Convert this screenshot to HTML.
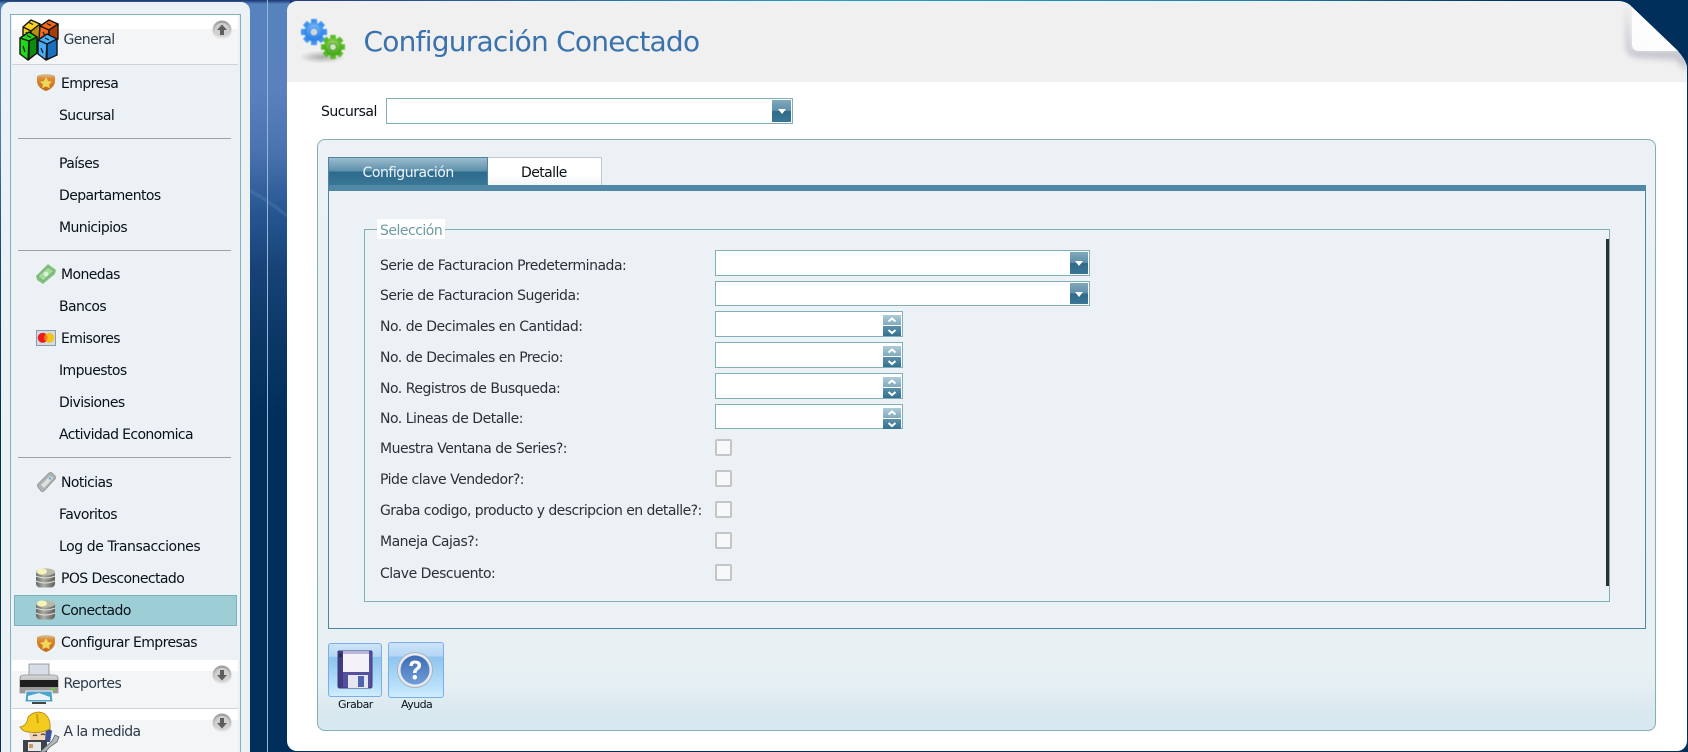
<!DOCTYPE html>
<html lang="es"><head><meta charset="utf-8"><title>Configuración Conectado</title>
<style>
html,body{margin:0;padding:0;width:1688px;height:752px;overflow:hidden}
body{position:relative;background:#002f5c;font-family:"DejaVu Sans","Liberation Sans",sans-serif;font-size:14px;color:#111}
.a{position:absolute;box-sizing:border-box}
.t{position:absolute;white-space:nowrap;line-height:20px;letter-spacing:-.58px;color:#0a1018;margin-top:1px}
.hr{position:absolute;left:18px;width:213px;height:1px;background:#a0a0a0}
.f{position:absolute;left:380px;white-space:nowrap;line-height:20px;letter-spacing:-.49px;color:#2b3036;margin-top:1px}
.i{position:absolute;box-sizing:border-box;background:#fff;border:1px solid #7fb0b6}
.b{position:absolute;box-sizing:border-box;background:linear-gradient(#7fa8bc,#5f90a9 48%,#2f6a8a 52%,#3b7696)}
.b:after{content:"";position:absolute;left:50%;top:50%;margin:-2px 0 0 -4px;border:4px solid transparent;border-top:5px solid #fff;border-bottom:0}
.u,.d{position:absolute;left:883px;width:18px;height:10px}
.u{background:linear-gradient(#aecbd8,#80aabd)}
.d{background:linear-gradient(#5b90aa,#33708f)}
.c{position:absolute;left:715px;width:17px;height:17px;box-sizing:border-box;border:2px solid #c4c6c6;border-radius:2px;background:#f6f8f9}
svg{position:absolute;overflow:visible}
</style></head><body>
<!-- background -->
<div class="a" style="left:0;top:0;width:290px;height:752px;background:linear-gradient(#17356e 0,#5583bd 4px,#5b80be 90px,#4a73b0 150px,#255591 215px,#174277 270px,#0b3767 340px,#002f5c 420px)"></div>
<svg style="left:249px;top:178px" width="38" height="60"><path d="M0 10C14 18 26 26 38 36V40C26 30 14 22 0 14Z" fill="#7ea5cf" opacity=".18"/></svg>
<div class="a" style="left:267px;top:0;width:1px;height:752px;background:#9ab5cf"></div>
<div class="a" style="left:280px;top:0;width:1408px;height:1px;background:linear-gradient(90deg,#2a3a80,#22a0c8 40%,#1a80a8 70%,#002f5c 88%)"></div>

<!-- left panel -->
<div class="a" style="left:1px;top:2px;width:249px;height:760px;background:#ebf1f4;border-radius:9px 9px 0 0"></div>
<div class="a" style="left:10px;top:14px;width:231px;height:750px;border:1px solid #7fb3bb"></div>
<div class="a" style="left:12px;top:15px;width:226px;height:14px;background:#fff"></div>
<div class="a" style="left:12px;top:29px;width:226px;height:35px;background:#f3f5f7"></div>
<div class="a" style="left:12px;top:64px;width:226px;height:1px;background:#cfd3d4"></div>
<div class="hr" style="top:138px"></div><div class="hr" style="top:457px" ></div><div class="hr" style="top:250px"></div>

<div class="a" style="left:14px;top:595px;width:223px;height:31px;background:#9dced6;border:1px solid #7cb1bf"></div>

<div class="a" style="left:12px;top:660px;width:226px;height:11px;background:#fff"></div>
<div class="a" style="left:12px;top:671px;width:226px;height:37px;background:#f3f5f7"></div>
<div class="a" style="left:12px;top:708px;width:226px;height:1px;background:#cfd3d4"></div>
<div class="a" style="left:12px;top:709px;width:226px;height:11px;background:#fff"></div>
<div class="a" style="left:12px;top:720px;width:226px;height:32px;background:#f3f5f7"></div>

<div class="t" style="left:63.5px;top:29px;color:#2e3a49">General</div>
<div class="t" style="left:61px;top:73px">Empresa</div>
<div class="t" style="left:59px;top:105px">Sucursal</div>
<div class="t" style="left:59px;top:153px">Países</div>
<div class="t" style="left:59px;top:185px">Departamentos</div>
<div class="t" style="left:59px;top:217px">Municipios</div>
<div class="t" style="left:61px;top:264px">Monedas</div>
<div class="t" style="left:59px;top:296px">Bancos</div>
<div class="t" style="left:61px;top:328px">Emisores</div>
<div class="t" style="left:59px;top:360px">Impuestos</div>
<div class="t" style="left:59px;top:392px">Divisiones</div>
<div class="t" style="left:59px;top:424px;letter-spacing:-.62px">Actividad Economica</div>
<div class="t" style="left:61px;top:472px">Noticias</div>
<div class="t" style="left:59px;top:504px">Favoritos</div>
<div class="t" style="left:59px;top:536px;letter-spacing:-.42px">Log de Transacciones</div>
<div class="t" style="left:61px;top:568px">POS Desconectado</div>
<div class="t" style="left:61px;top:600px">Conectado</div>
<div class="t" style="left:61px;top:632px">Configurar Empresas</div>
<div class="t" style="left:63.5px;top:673px;color:#2e3a49">Reportes</div>
<div class="t" style="left:63.5px;top:721px;color:#2e3a49">A la medida</div>

<!-- dice -->
<svg style="left:18px;top:19px" width="42" height="42" viewBox="0 0 42 42" stroke="#141414" stroke-width="1.400" stroke-linejoin="round">
<path d="M5 8L13 1L22 5L22 20L13 25L5 19Z" fill="#f7d21e"/><path d="M13 12L22 5V20L13 25Z" fill="#b8900e"/><path d="M5 8L13 12V25" fill="none"/><path d="M11 3.500L15 5.500M8 13L10 17" stroke-width="1.200" fill="none"/>
<path d="M22 7L31 1L40 5L39 20L30 24L21 20Z" fill="#f2691a"/><path d="M31 11L40 5V20L30 24Z" fill="#a83c08"/><path d="M22 7L31 11V24" fill="none"/><path d="M29 4.500L33 6.500M25 13L27 17" stroke-width="1.200" fill="none"/>
<path d="M2 19L11 13L19 18L19 34L10 41L2 35Z" fill="#22d818"/><path d="M11 22L19 18V34L10 41Z" fill="#0e8a0e"/><path d="M2 19L11 22V41" fill="none"/><path d="M9 16.500L13 18.500M5 27L7 33" stroke-width="1.200" fill="none"/>
<path d="M20 21L29 15L39 20L38 36L28 41L20 35Z" fill="#46aef8"/><path d="M29 25L39 20V36L28 41Z" fill="#1a70c0"/><path d="M20 21L29 25V41" fill="none"/><path d="M27 19L31 21M23 29L25 34" stroke-width="1.200" fill="none"/>
</svg>
<!-- up arrow -->
<svg style="left:212px;top:20px" width="20" height="20"><defs><linearGradient id="g1" x1="0" y1="0" x2="0" y2="1"><stop offset="0" stop-color="#9a9a9a"/><stop offset="1" stop-color="#efefef"/></linearGradient></defs><circle cx="10" cy="10" r="9.500" fill="url(#g1)"/><circle cx="10" cy="10" r="7" fill="#d0d0d0"/><path d="M10 4.500L15 10H12V15H8V10H5Z" fill="#5e5e5e"/></svg>
<svg style="left:212px;top:665px" width="20" height="20"><circle cx="10" cy="10" r="9.500" fill="url(#g1)"/><circle cx="10" cy="10" r="7" fill="#d0d0d0"/><path d="M10 15.500L15 10H12V5H8V10H5Z" fill="#5e5e5e"/></svg>
<svg style="left:212px;top:713px" width="20" height="20"><circle cx="10" cy="10" r="9.500" fill="url(#g1)"/><circle cx="10" cy="10" r="7" fill="#d0d0d0"/><path d="M10 15.500L15 10H12V5H8V10H5Z" fill="#5e5e5e"/></svg>

<!-- shield icons -->
<svg style="left:37px;top:73px" width="18" height="18" viewBox="0 0 18 18"><defs><linearGradient id="s" x1="0" y1="0" x2="0" y2="1"><stop offset="0" stop-color="#cfc9b0"/><stop offset=".25" stop-color="#e08a34"/><stop offset="1" stop-color="#bc6a18"/></linearGradient></defs><path d="M0 3Q9 -1 18 3V9Q17 15 9 18Q1 15 0 9Z" fill="url(#s)"/><path d="M9 4L11 8L15 8.700L12.100 11.400L12.800 15.300L9 13.400L5.200 15.300L5.900 11.400L3 8.700L7 8Z" fill="#eed95c"/></svg>
<svg style="left:37px;top:634px" width="18" height="18" viewBox="0 0 18 18"><path d="M0 3Q9 -1 18 3V9Q17 15 9 18Q1 15 0 9Z" fill="url(#s)"/><path d="M9 4L11 8L15 8.700L12.100 11.400L12.800 15.300L9 13.400L5.200 15.300L5.900 11.400L3 8.700L7 8Z" fill="#eed95c"/></svg>
<!-- money -->
<svg style="left:36px;top:264px" width="20" height="20" viewBox="0 0 20 20"><path d="M0 12L12 0L20 6L19 10L7 20L1 16Z" fill="#86c281"/><path d="M2 12L12 3L18 7L7 17Z" fill="#a4d89c" stroke="#6aa86c" stroke-width=".7"/><circle cx="10" cy="10" r="2.400" fill="#d8f0d4"/></svg>
<!-- card -->
<svg style="left:36px;top:330px" width="20" height="16" viewBox="0 0 20 16"><rect x=".5" y=".5" width="19" height="15" fill="#cfdde8" stroke="#8e9a9f"/><circle cx="6.700" cy="7.800" r="5" fill="#ee1c1c"/><circle cx="13.300" cy="7.800" r="5" fill="#f4c21e"/><path d="M10 4.200A5 5 0 0 1 10 11.400A5 5 0 0 1 10 4.200Z" fill="#f47a1a"/></svg>
<!-- tag -->
<svg style="left:37px;top:472px" width="19" height="20" viewBox="0 0 19 20"><path d="M1 12L12 1Q13.500 0 15 1L18 4Q19 5.500 18 7L7 19Q5.500 20 4 19L1 15Q0 13.500 1 12Z" fill="#b0b3b3" stroke="#909090" stroke-width=".8"/><path d="M4 13L13 4L16 6L7 16Z" fill="#dfe2e2"/><circle cx="13" cy="6.500" r="1.200" fill="#6fa5c8"/></svg>
<!-- db -->
<svg style="left:36px;top:568px" width="19" height="20" viewBox="0 0 19 20"><defs><linearGradient id="dbg" x1="0" y1="0" x2="1" y2="0"><stop offset="0" stop-color="#666"/><stop offset=".4" stop-color="#acaca6"/><stop offset="1" stop-color="#5f5f5a"/></linearGradient><g id="db"><rect x="0" y="2" width="19" height="17.500" rx="4" fill="url(#dbg)"/><path d="M0 8Q9.500 12 19 8M0 13Q9.500 17 19 13" stroke="#e2e2dc" stroke-width="1" fill="none"/><ellipse cx="9.500" cy="4" rx="9.500" ry="3.600" fill="#b9b9aa"/><ellipse cx="6" cy="3.500" rx="5" ry="3" fill="#f6f2b8"/></g></defs><use href="#db"/></svg>
<svg style="left:36px;top:600px" width="19" height="20" viewBox="0 0 19 20"><use href="#db"/></svg>
<!-- printer -->
<svg style="left:19px;top:664px" width="40" height="40" viewBox="0 0 40 40"><defs><linearGradient id="pr" x1="0" y1="0" x2="0" y2="1"><stop offset="0" stop-color="#d8d8d8"/><stop offset="1" stop-color="#8c8c8c"/></linearGradient></defs><rect x="10" y="0" width="20" height="14" fill="#d6dce8" stroke="#8a8a8a" stroke-width=".8"/><path d="M1 14Q1 11 5 11H35Q39 11 39 14V29H1Z" fill="url(#pr)" stroke="#666" stroke-width=".6"/><rect x="1" y="16" width="38" height="7" fill="#1e1e1e"/><rect x="1" y="23" width="38" height="6" fill="#9a9a9a"/><rect x="32" y="24" width="4" height="2" fill="#7c3"/><path d="M7 27H33L34 38H6Z" fill="#4fa4cc" stroke="#f4f8fa" stroke-width="1"/><path d="M9 32L20 29L31 33V36H9Z" fill="#e8f4f8"/><rect x="13" y="38" width="14" height="2" fill="#444"/></svg>
<!-- worker -->
<svg style="left:20px;top:711px" width="40" height="41" viewBox="0 0 40 41"><path d="M8 20H28L28 29Q20 36 11 30Z" fill="#f3d6b8"/><path d="M13 25q2-2 4 0M21 24q2-2 4 0" stroke="#4a3a30" fill="none" stroke-width="1.200"/><path d="M26 15L32 20L30 31L25 31Z" fill="#3f4f98"/><path d="M0 16Q7 15 8 6Q16 -2 25 3Q31 8 30 18Q20 23 9 21Q3 21 0 16Z" fill="#f3cb1f" stroke="#a88410" stroke-width=".8"/><path d="M17 3L18 12" stroke="#c8a212" stroke-width="2" fill="none"/><rect x="3" y="29" width="24" height="12" fill="#3e444c"/><rect x="8" y="31" width="13" height="9" fill="#e8e8ec"/><rect x="9" y="33" width="4" height="4" fill="#c96"/><path d="M20 41L32 30L35 24L39 26L37 31L31 35L25 41Z" fill="#b0b8c0" stroke="#666" stroke-width=".8"/></svg>

<!-- main panel -->
<div class="a" style="left:287px;top:1px;width:1400px;height:750px;background:#fff;border-radius:10px"></div>
<div class="a" style="left:287px;top:1px;width:1400px;height:81px;background:#f0f0f0;border-radius:10px 10px 0 0"></div>
<!-- curl -->
<svg style="left:1600px;top:0" width="88" height="84" viewBox="0 0 88 84"><defs><linearGradient id="cp" x1="0" y1="1" x2="1" y2="0"><stop offset="0" stop-color="#fbfbfc"/><stop offset=".72" stop-color="#ffffff"/><stop offset=".9" stop-color="#d4eef1"/><stop offset="1" stop-color="#c6e6ea"/></linearGradient><filter id="bl" x="-30%" y="-30%" width="160%" height="160%"><feGaussianBlur stdDeviation="3"/></filter></defs>
<path d="M26 4V48Q28 58 40 58L76 60L87 72V60L80 50H32Z" fill="#b8b8c4" opacity=".75" filter="url(#bl)"/>
<path d="M20 1H88V70C86 60 82 56 78 51L32 7Q28 2 20 1Z" fill="#002f5c"/>
<path d="M32 7L78 51H38Q32 50 32 44Z" fill="url(#cp)"/>
</svg>
<div class="a" style="left:1687px;top:0;width:1px;height:752px;background:#002f5c"></div>

<!-- gears -->
<svg style="left:300px;top:19px" width="48" height="44" viewBox="0 0 48 44"><defs><radialGradient id="bg" cx=".5" cy=".35"><stop offset="0" stop-color="#8cc8fc"/><stop offset="1" stop-color="#2e86ea"/></radialGradient><radialGradient id="gg" cx=".5" cy=".35"><stop offset="0" stop-color="#a8e070"/><stop offset="1" stop-color="#4aac1c"/></radialGradient><radialGradient id="sh"><stop offset="0" stop-color="#808080" stop-opacity=".6"/><stop offset="1" stop-color="#808080" stop-opacity="0"/></radialGradient><filter id="bb"><feGaussianBlur stdDeviation=".4"/></filter></defs>
<ellipse cx="22" cy="38" rx="23" ry="6.500" fill="url(#sh)"/>
<g filter="url(#bb)"><g stroke="#3f92f0" stroke-width="6"><path d="M14 0V26M1 13H27M5 4L23 22M23 4L5 22"/></g><circle cx="14" cy="13" r="9.500" fill="url(#bg)"/><circle cx="14" cy="13" r="4" fill="#c8d8e6" stroke="#3a78c8"/>
<g stroke="#58b826" stroke-width="5.500"><path d="M33 16V40M21 28H45M24.500 19.500L41.500 36.500M41.500 19.500L24.500 36.500"/></g><circle cx="33" cy="28" r="9" fill="url(#gg)"/><circle cx="33" cy="28" r="3.500" fill="#cfe6c0" stroke="#3c8c14"/></g></svg>
<div class="t" style="left:363.500px;top:24px;margin-top:2px;line-height:32px;font-size:28px;letter-spacing:-.76px;color:#3a72ae">Configuración Conectado</div>

<!-- sucursal -->
<div class="t" style="left:321px;top:101px;letter-spacing:-.5px">Sucursal</div>
<div class="i" style="left:386px;top:98px;width:407px;height:26px"></div>
<div class="b" style="left:772px;top:100px;width:19px;height:22px"></div>

<!-- group -->
<div class="a" style="left:317px;top:139px;width:1339px;height:592px;border:1px solid #84b0b5;border-radius:8px;background:linear-gradient(#ebf1f4,#e9f0f3 515px,#e5eff3 545px,#d9e8ef 572px,#d8e8f0)"></div>
<!-- tabs -->
<div class="a" style="left:328px;top:157px;width:160px;height:28px;background:linear-gradient(#9cbccd,#5d91ab 48%,#2c6b8c 52%,#3b7696);border:1px solid #4d86a2;border-bottom:0"></div>
<div class="a" style="left:488px;top:157px;width:114px;height:28px;background:linear-gradient(#fff 60%,#f2f4f5);border:1px solid #c2c8ca;border-left:0;border-bottom:0"></div>
<div class="a" style="left:328px;top:185px;width:1318px;height:444px;background:#ebf1f4;border:1px solid #4c88a4;border-top:6px solid #5088a6"></div>
<div class="t" style="left:362.500px;top:162px;color:#eef5f8;letter-spacing:-.45px">Configuración</div>
<div class="t" style="left:521px;top:162px">Detalle</div>

<!-- fieldset -->
<div class="a" style="left:364px;top:229px;width:1246px;height:373px;border:1px solid #7fb0b6"></div>
<div class="a" style="left:377px;top:219px;width:68px;height:20px;background:#fff"></div>
<div class="t" style="left:380px;top:220px;color:#6d9aa3;letter-spacing:-.5px">Selección</div>
<div class="a" style="left:1606px;top:239px;width:3px;height:347px;background:#2e2e2e"></div>

<div class="f" style="top:255px">Serie de Facturacion Predeterminada:</div>
<div class="f" style="top:285px">Serie de Facturacion Sugerida:</div>
<div class="f" style="top:316px">No. de Decimales en Cantidad:</div>
<div class="f" style="top:347px">No. de Decimales en Precio:</div>
<div class="f" style="top:378px">No. Registros de Busqueda:</div>
<div class="f" style="top:408px">No. Lineas de Detalle:</div>
<div class="f" style="top:438px">Muestra Ventana de Series?:</div>
<div class="f" style="top:469px">Pide clave Vendedor?:</div>
<div class="f" style="top:500px;letter-spacing:-.55px">Graba codigo, producto y descripcion en detalle?:</div>
<div class="f" style="top:531px">Maneja Cajas?:</div>
<div class="f" style="top:563px">Clave Descuento:</div>

<div class="i" style="left:715px;top:250px;width:375px;height:26px"></div>
<div class="b" style="left:1070px;top:252px;width:18px;height:22px"></div>
<div class="i" style="left:715px;top:281px;width:375px;height:25px"></div>
<div class="b" style="left:1070px;top:283px;width:18px;height:21px"></div>

<div class="i" style="left:715px;top:311px;width:188px;height:26px"></div>
<div class="i" style="left:715px;top:342px;width:188px;height:26px"></div>
<div class="i" style="left:715px;top:373px;width:188px;height:26px"></div>
<div class="i" style="left:715px;top:404px;width:188px;height:25px"></div>

<div class="u" style="top:315px"></div><div class="d" style="top:326px"></div>
<div class="u" style="top:346px"></div><div class="d" style="top:357px"></div>
<div class="u" style="top:377px"></div><div class="d" style="top:388px"></div>
<div class="u" style="top:408px"></div><div class="d" style="top:419px"></div>
<svg style="left:883px;top:315px" width="18" height="114" fill="none" stroke-width="2"><g stroke="#fff"><path d="M5.500 6.500L9 3.500L12.500 6.500M5.500 15L9 18L12.500 15"/><path d="M5.500 37.500L9 34.500L12.500 37.500M5.500 46L9 49L12.500 46"/><path d="M5.500 68.500L9 65.500L12.500 68.500M5.500 77L9 80L12.500 77"/><path d="M5.500 99.500L9 96.500L12.500 99.500M5.500 108L9 111L12.500 108"/></g></svg>

<div class="c" style="top:439px"></div>
<div class="c" style="top:470px"></div>
<div class="c" style="top:501px"></div>
<div class="c" style="top:532px"></div>
<div class="c" style="top:564px"></div>

<!-- buttons -->
<div class="a" style="left:328px;top:643px;width:54px;height:54px;border:1px solid #7aaee8;border-radius:3px;background:linear-gradient(#cde4f8 0,#b4d6f4 24%,#8ec4ee 26%,#b8e0fa 80%,#cfeefe)"></div>
<div class="a" style="left:388px;top:642px;width:56px;height:56px;border:1px solid #7aaee8;border-radius:3px;background:linear-gradient(#cde4f8 0,#b4d6f4 24%,#8ec4ee 26%,#b8e0fa 80%,#cfeefe)"></div>
<svg style="left:337px;top:650px" width="36" height="39" viewBox="0 0 36 39"><path d="M1 2Q1 1 2 1H34Q35 1 35 2V36Q35 38 33 38H3Q1 38 1 36Z" fill="#55509e" stroke="#3d3a78"/><rect x="1" y="1" width="5" height="37" fill="#3f3b80"/><rect x="6" y="1" width="26" height="21" fill="#f4f2f8"/><rect x="6" y="1" width="26" height="3" fill="#b8b6d8"/><rect x="11" y="25" width="20" height="13" fill="#e6e6ee"/><rect x="21" y="26" width="6" height="11" fill="#4e64b0"/><rect x="2.500" y="4" width="2" height="3" fill="#222"/></svg>
<svg style="left:397px;top:652px" width="36" height="36" viewBox="0 0 36 36"><defs><linearGradient id="hg" x1="0" y1="0" x2="0" y2="1"><stop offset="0" stop-color="#3f6cb2"/><stop offset="1" stop-color="#6f9cd8"/></linearGradient></defs><circle cx="18" cy="18" r="17.500" fill="#e4eaf0" stroke="#a8b4c0"/><circle cx="18" cy="18" r="14.500" fill="url(#hg)"/><path d="M12.500 14Q12.500 8.500 18 8.500Q24 8.500 24 13.500Q24 16.500 21 18Q19.500 19 19.500 21H16Q16 18 18.500 16Q20.500 14.800 20.500 13.500Q20.500 11.500 18 11.500Q15.800 11.500 15.800 14Z" fill="#fff"/><circle cx="17.800" cy="25.200" r="2.300" fill="#fff"/></svg>
<div class="t" style="left:338px;top:694px;font-size:11px;letter-spacing:-.55px">Grabar</div>
<div class="t" style="left:401px;top:694px;font-size:11px;letter-spacing:-.55px">Ayuda</div>
</body></html>
